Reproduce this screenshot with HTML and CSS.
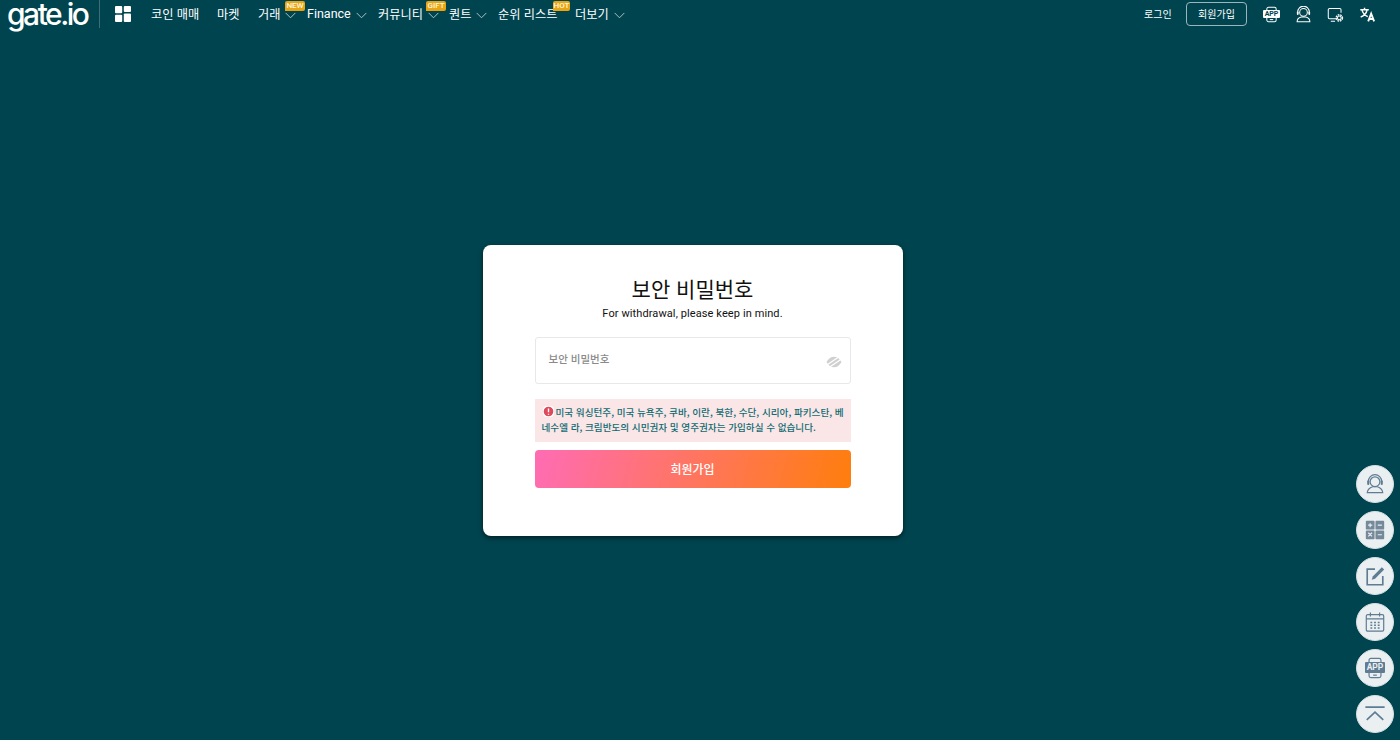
FILE: index.html
```html
<!DOCTYPE html>
<html lang="ko">
<head>
<meta charset="utf-8">
<title>gate.io</title>
<link rel="stylesheet" href="styles.css">
</head>
<body>
<div class="page">
  <header class="top">
    <a class="logo">gate.io</a>
    <span class="divider"></span>
    <svg class="grid-ico" viewBox="0 0 16 16"><rect x="0" y="0" width="7.200" height="7.200" rx="1"/><rect x="8.800" y="0" width="7.200" height="6" rx="1"/><rect x="0" y="8.800" width="7.200" height="7.200" rx="1"/><rect x="8.800" y="7.600" width="7.200" height="8.400" rx="1"/></svg>
    <nav class="nav">
      <a class="nav-item n1">코인 매매</a>
      <a class="nav-item n2">마켓</a>
      <a class="nav-item n3">거래<svg class="chev" viewBox="0 0 12 7"><path d="M.7.7 6 6l5.300-5.300"/></svg><span class="tag tag-new">NEW</span></a>
      <a class="nav-item n4 latin">Finance<svg class="chev" viewBox="0 0 12 7"><path d="M.7.7 6 6l5.300-5.300"/></svg></a>
      <a class="nav-item n5">커뮤니티<svg class="chev" viewBox="0 0 12 7"><path d="M.7.7 6 6l5.300-5.300"/></svg><span class="tag tag-gift">GIFT</span></a>
      <a class="nav-item n6">퀀트<svg class="chev" viewBox="0 0 12 7"><path d="M.7.7 6 6l5.300-5.300"/></svg></a>
      <a class="nav-item n7">순위 리스트<span class="tag tag-hot">HOT</span></a>
      <a class="nav-item n8">더보기<svg class="chev" viewBox="0 0 12 7"><path d="M.7.7 6 6l5.300-5.300"/></svg></a>
    </nav>
    <div class="right">
      <a class="login">로그인</a>
      <a class="signup">회원가입</a>
      <span class="r-app"><svg class="r-ico r-first" viewBox="0 0 20 20"><rect x="4.500" y="1.500" width="11" height="17" rx="2"/><path d="M8 16h4"/></svg><span class="r-app-label">APP</span></span>
      <svg class="r-ico" viewBox="0 0 20 20"><circle cx="10" cy="7.500" r="4.500"/><path d="M3.200 9.500V7a6.800 6.800 0 0 1 13.600 0v2.500M2.500 18.500c0-3 2.500-5 5-5.500h5c2.500.5 5 2.500 5 5.500z"/><rect class="fill" x="2.200" y="6.500" width="2" height="4" rx="1"/><rect class="fill" x="15.800" y="6.500" width="2" height="4" rx="1"/></svg>
      <svg class="r-ico" viewBox="0 0 20 20"><path d="M10.500 15H3a1.500 1.500 0 0 1-1.500-1.500v-9A1.500 1.500 0 0 1 3 3h12a1.500 1.500 0 0 1 1.500 1.500V8M4.500 18h5"/><circle class="gear" cx="14.500" cy="14" r="2.200"/><circle class="gear-ring" cx="14.500" cy="14" r="3.700"/></svg>
      <svg class="r-ico r-lang" viewBox="0 0 20 20"><path d="M1.500 4.500h10M6.500 2v2.500M9.500 4.500c-.8 4-3.400 7-7.500 8.500M3.500 4.500c.8 3.500 3.500 6.500 6.800 8"/><path class="heavy" d="M10.800 18l3.500-9 3.500 9M12 15.300h4.700"/></svg>
    </div>
  </header>

  <main class="main">
    <section class="card">
      <h1 class="title">보안 비밀번호</h1>
      <p class="sub">For withdrawal, please keep in mind.</p>
      <div class="field">
        <span class="placeholder">보안 비밀번호</span>
        <svg class="eye" viewBox="0 0 16 14"><path d="M.5 7c2-3.600 4.500-5.300 7.500-5.300s5.500 1.700 7.500 5.300c-2 3.600-4.500 5.300-7.500 5.300S2.500 10.600.5 7z"/><path class="slash" d="M.5 10.300 13 1.800M3 12.500 15.500 4"/></svg>
      </div>
      <div class="warn"><svg class="warn-ico" viewBox="0 0 12 12"><circle cx="6" cy="6" r="6"/><path d="M6 2.600v4.200M6 8.400v1.100"/></svg>미국 워싱턴주, 미국 뉴욕주, 쿠바, 이란, 북한, 수단, 시리아, 파키스탄, 베네수엘 라, 크림반도의 시민권자 및 영주권자는 가입하실 수 없습니다.</div>
      <button class="submit" type="button">회원가입</button>
    </section>
  </main>

  <aside class="side">
    <a class="side-btn"><svg viewBox="0 0 24 24"><circle cx="12" cy="9.500" r="5.300"/><path d="M4.800 11.500V9a7.200 7.200 0 0 1 14.400 0v2.500M3.500 21.500c0-3.500 3.500-6 6-6.500h5c2.500.5 6 3 6 6.500z"/><rect class="solid" x="3.500" y="8" width="2.300" height="5" rx="1.100"/><rect class="solid" x="18.200" y="8" width="2.300" height="5" rx="1.100"/></svg></a>
    <a class="side-btn"><svg class="filled" viewBox="0 0 24 24"><rect x="2" y="2" width="9.500" height="9.500" rx="1"/><rect x="12.500" y="2" width="9.500" height="9.500" rx="1"/><rect x="2" y="12.500" width="9.500" height="9.500" rx="1"/><rect x="12.500" y="12.500" width="9.500" height="9.500" rx="1"/><path class="w" d="M4.500 6.700h4.500M6.700 4.500v4.500M15 6.700h4.500M4.700 15l4 4M8.700 15l-4 4M15 17.200h4.500"/></svg></a>
    <a class="side-btn"><svg viewBox="0 0 24 24"><path class="thick" d="M12 4.500H3.500v17h17V12"/><path class="solid" d="M9.500 12.500 19.500 2.500l2.500 2.500-10 10-3.500 1z"/></svg></a>
    <a class="side-btn"><svg viewBox="0 0 24 24"><rect x="2.500" y="4" width="19" height="18" rx="1.500"/><path d="M2.500 8.500h19M7 1.500v4.500M17 1.500v4.500"/><path class="dots" d="M7 12.500h2M11 12.500h2M15 12.500h2M7 15.500h2M11 15.500h2M15 15.500h2M7 18.500h2M11 18.500h2M15 18.500h2"/></svg></a>
    <a class="side-btn side-app"><svg viewBox="0 0 24 24"><rect x="5.500" y="1.500" width="13" height="21" rx="2"/><path d="M10 19.800h4"/></svg><span class="app-label">APP</span></a>
    <a class="side-btn"><svg viewBox="0 0 24 24"><path class="thick" d="M1.500 4.500h21M3 18.500l9-8.500 9 8.500"/></svg></a>
  </aside>
</div>
</body>
</html>
```

FILE: styles.css
```css
* { box-sizing: border-box; }
html, body { margin: 0; height: 100%; }
body {
  background: #00444f;
  font-family: "Noto Sans CJK KR", "Noto Sans", sans-serif;
  color: #fff;
  overflow: hidden;
}
a { color: inherit; text-decoration: none; }
.page { position: relative; width: 1400px; height: 740px; display: flex; flex-direction: column; }

/* Header */
.top { height: 30px; display: flex; align-items: center; flex: none; padding: 0 24px 2px 7px; }
.logo {
  font-family: "Inter", sans-serif;
  font-size: 30px; line-height: 28px; font-weight: 500; letter-spacing: -2.500px;
  width: 82px; height: 28px; white-space: nowrap;
}
.divider { width: 1px; height: 28px; background: #3e6d75; margin: 0 15px 0 10px; flex: none; }
.grid-ico { width: 16px; height: 16px; fill: #fff; flex: none; }
.nav { display: flex; align-items: center; margin-left: 20px; font-size: 12.200px; }
.nav-item { position: relative; display: flex; align-items: center; white-space: nowrap; line-height: 28px; }
.n1 { width: 66px; }
.n2 { width: 41px; }
.n3 { width: 49px; }
.n4 { width: 71px; }
.n5 { width: 71px; }
.n6 { width: 49px; }
.n7 { width: 77px; }
.latin { font-family: "Roboto", sans-serif; font-size: 12.500px; }
.chev { width: 11px; height: 7px; margin-left: 5px; margin-top: 2px; fill: none; stroke: #b9cbce; stroke-width: 1; flex: none; }
.tag {
  position: absolute; top: 1px; height: 10px; padding: 0;
  background: #e9a512; border-radius: 2px 2px 2px 0;
  font-family: "Roboto", sans-serif; font-size: 8px; font-weight: 500; line-height: 10px; color: #fff8e2; text-align: center;
}
.tag-new { left: 27px; width: 20px; }
.tag-gift { left: 48px; width: 20px; }
.tag-hot { left: 55px; width: 17px; }

.right { margin-left: auto; display: flex; align-items: center; }
.login { font-size: 10px; width: 42px; margin-top: -2px; }
.signup {
  width: 61px; height: 24px; border: 1px solid #9db6bb; border-radius: 4px;
  font-size: 10px; line-height: 21px; text-align: center; margin-right: 16px;
}
.r-ico { width: 17px; height: 17px; margin-left: 15px; fill: none; stroke: #fff; stroke-width: 1.200; flex: none; }
.r-first { margin-left: 0; display: block; }
.r-app { position: relative; display: block; }
.r-app-label {
  position: absolute; left: 0; top: 4px; width: 17px; height: 8px; background: #fff; border-radius: 1px;
  font-family: "Roboto", sans-serif; font-size: 7px; font-weight: 700; line-height: 8px; color: #00444f; text-align: center;
}
.r-ico .fill { fill: #fff; stroke: none; }
.r-ico .gear { fill: none; stroke: #fff; stroke-width: 1.300; }
.r-ico .gear-ring { fill: none; stroke: #fff; stroke-width: 1.600; stroke-dasharray: 2 1; }
.r-ico .heavy { stroke-width: 2.200; }
.r-lang { stroke-width: 1.700; }

/* Card */
.main { flex: 1; display: flex; justify-content: center; padding-top: 215px; }
.card {
  width: 420px; height: 291px; margin-left: -15px; background: #fff; border-radius: 8px;
  padding: 26px 52px 0;
  box-shadow: 0 2px 5px rgba(0, 0, 0, .55);
  display: flex; flex-direction: column;
}
.title { margin: 0; font-size: 21px; font-weight: 400; line-height: 34px; color: #111; text-align: center; }
.sub { margin: 1px 0 0; font-family: "Roboto", sans-serif; font-size: 11px; line-height: 16px; color: #111; text-align: center; letter-spacing: .1px; }
.field {
  margin-top: 15px; height: 47px; border: 1px solid #e6e8e9; border-radius: 3px;
  display: flex; align-items: center; justify-content: space-between; padding: 0 8px 4px 13px;
}
.placeholder { font-size: 10.500px; font-weight: 500; color: #8a8a8a; }
.eye { width: 16px; height: 14px; margin-top: 6px; fill: #d0d0d0; }
.eye .slash { fill: none; stroke: #fff; stroke-width: 1.200; }
.warn {
  margin-top: 15px; height: 43px; background: #fbe6e7; padding: 6px 2px 0 7px;
  font-size: 9.600px; font-weight: 500; line-height: 15px; color: #0e6b72; word-break: break-all;
}
.warn-ico { width: 11px; height: 11px; margin: 0 2px 0 1px; vertical-align: -1px; fill: #dc4a5e; stroke: #fff; stroke-width: 1.500; }
.submit {
  margin-top: 8px; height: 38px; width: 100%; border: 0; border-radius: 4px;
  background: linear-gradient(105deg, #ff6cb4 0%, #ff7e0c 100%);
  color: #fff; font-family: inherit; font-size: 12px; font-weight: 500; padding: 0 0 2px;
}

/* Floating buttons */
.side { position: absolute; left: 1356px; top: 465px; display: flex; flex-direction: column; gap: 8px; }
.side-btn {
  position: relative; width: 38px; height: 38px; border-radius: 50%;
  background: #eaeff1; border: 1px solid #d5dfe2;
  display: flex; align-items: center; justify-content: center;
}
.side-btn svg { width: 22px; height: 22px; fill: none; stroke: #5f7c92; stroke-width: 1.300; }
.side-btn svg.filled { fill: #75899a; stroke: none; }
.side-btn .w { fill: none; stroke: #eaeff1; stroke-width: 1.300; }
.side-btn .thick { stroke-width: 1.800; }
.side-btn .solid { fill: #5f7c92; stroke: none; }
.side-btn .dots { stroke-width: 1.500; }
.app-label {
  position: absolute; left: 8px; top: 12px; width: 20px; height: 11px; background: #5f7c92; border-radius: 1px;
  font-family: "Roboto", sans-serif; font-size: 8.500px; font-weight: 700; line-height: 11px; color: #eaeff1; text-align: center;
}
```
